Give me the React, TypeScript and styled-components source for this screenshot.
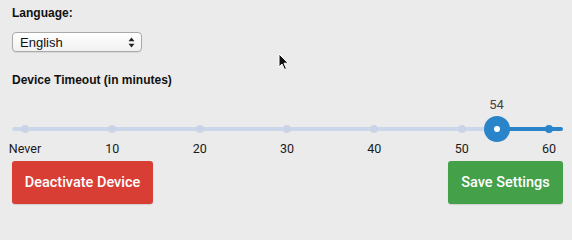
import React, { useState } from "react";
import styled, { createGlobalStyle } from "styled-components";

const GlobalStyle = createGlobalStyle`
    html, body {
        margin: 0;
        padding: 0;
        background: #ebebeb;
        width: 572px;
        height: 216px;
        overflow: hidden;
    }
`;

const Page = styled.div`
    position: relative;
    box-sizing: border-box;
    width: 572px;
    height: 216px;
    padding: 6px 9px 0 12px;
    display: flex;
    flex-direction: column;
    font-family: "Liberation Sans", Arial, sans-serif;
    color: #111;
`;

const Label = styled.div`
    font-size: 12px;
    font-weight: bold;
    line-height: 14px;
    margin-bottom: ${(p: { $gap: number }) => p.$gap}px;
`;

const SelectBox = styled.div`
    position: relative;
    box-sizing: border-box;
    width: 130px;
    height: 20px;
    border: 1px solid #a9a9a9;
    border-radius: 4px;
    background: linear-gradient(#ffffff, #f1f1f1);
    box-shadow: 0 1px 1px rgba(0, 0, 0, 0.08);
    display: flex;
    align-items: center;
    justify-content: space-between;
    padding: 0 6px 0 7px;
    font-size: 13px;
    margin-bottom: 21px;
`;

const SliderWrap = styled.div`
    position: relative;
    width: 551px;
    height: 62px;
`;

const Rail = styled.div<{ $dark?: boolean }>`
    position: absolute;
    top: 28px;
    height: 4px;
    border-radius: 2px;
    background: ${(p) => (p.$dark ? "#2a84c9" : "#cdd7ec")};
`;

const Marks = styled.div`
    position: absolute;
    left: 13px;
    right: 14px;
    top: 0;
    bottom: 0;
`;

const Dot = styled.div<{ $dark?: boolean }>`
    position: absolute;
    top: 30px;
    width: 8px;
    height: 8px;
    margin: -4px 0 0 -4px;
    border-radius: 50%;
    background: ${(p) => (p.$dark ? "#2a84c9" : "#cbd4e7")};
`;

const TickLabel = styled.div`
    position: absolute;
    top: 42px;
    transform: translateX(-50%);
    font-family: Roboto, "Liberation Sans", sans-serif;
    font-size: 12.5px;
    color: #1a1a1a;
    white-space: nowrap;
`;

const Thumb = styled.div`
    position: absolute;
    top: 30px;
    width: 26px;
    height: 26px;
    margin: -13px 0 0 -13px;
    border-radius: 50%;
    background: #2a84c9;
    display: flex;
    align-items: center;
    justify-content: center;
    &::after {
        content: "";
        width: 6px;
        height: 6px;
        border-radius: 50%;
        background: #fff;
    }
`;

const ValueLabel = styled.div`
    position: absolute;
    top: -2px;
    transform: translateX(-50%);
    font-family: Roboto, "Liberation Sans", sans-serif;
    font-size: 13px;
    color: #444;
`;

const ButtonRow = styled.div`
    display: flex;
    justify-content: space-between;
    width: 551px;
`;

const Button = styled.button<{ $color: string; $w: number }>`
    width: ${(p) => p.$w}px;
    height: 43px;
    border: none;
    border-radius: 3px;
    background: ${(p) => p.$color};
    color: #fff;
    font-family: Roboto, "Liberation Sans", sans-serif;
    font-size: 14.5px;
    font-weight: 500;
    box-shadow: 0 1px 1px rgba(0, 0, 0, 0.12);
    cursor: pointer;
`;

const Cursor = styled.svg`
    position: absolute;
    left: 278px;
    top: 53px;
`;

const ticks = [0, 10, 20, 30, 40, 50, 60];

const Arrows = () => (
    <svg width="7" height="11" viewBox="0 0 7 11">
        <path d="M3.5 0.5 L6.5 4.3 L0.5 4.3 Z" fill="#222" />
        <path d="M3.5 10.5 L6.5 6.7 L0.5 6.7 Z" fill="#222" />
    </svg>
);

const App = () => {
    const [value] = useState(54);
    const pct = (v: number) => `${(v / 60) * 100}%`;
    // marks sit 13px in from each end of the rail
    const thumbX = 13 + (value / 60) * 524;

    return (
        <>
            <GlobalStyle />
            <Page>
                <Label $gap={12}>Language:</Label>
                <SelectBox>
                    <span>English</span>
                    <Arrows />
                </SelectBox>
                <Label $gap={12}>Device Timeout (in minutes)</Label>
                <SliderWrap>
                    <Rail style={{ left: 0, width: thumbX }} />
                    <Rail $dark style={{ left: thumbX, right: 0 }} />
                    <Marks>
                        {ticks.map((t) => (
                            <React.Fragment key={t}>
                                <Dot $dark={t > value} style={{ left: pct(t) }} />
                                <TickLabel style={{ left: pct(t) }}>{t === 0 ? "Never" : t}</TickLabel>
                            </React.Fragment>
                        ))}
                        <ValueLabel style={{ left: pct(value) }}>{value}</ValueLabel>
                        <Thumb style={{ left: pct(value) }} />
                    </Marks>
                </SliderWrap>
                <ButtonRow>
                    <Button $color="#d83e34" $w={141}>Deactivate Device</Button>
                    <Button $color="#44a049" $w={115}>Save Settings</Button>
                </ButtonRow>
                <Cursor width="12" height="18" viewBox="0 0 12 18">
                    <path d="M1 1 L1 14 L4 11 L6.5 16.5 L8.5 15.6 L6 10.2 L10.2 10.2 Z" fill="#111" stroke="#fff" strokeWidth="1" />
                </Cursor>
            </Page>
        </>
    );
};

export default App;
